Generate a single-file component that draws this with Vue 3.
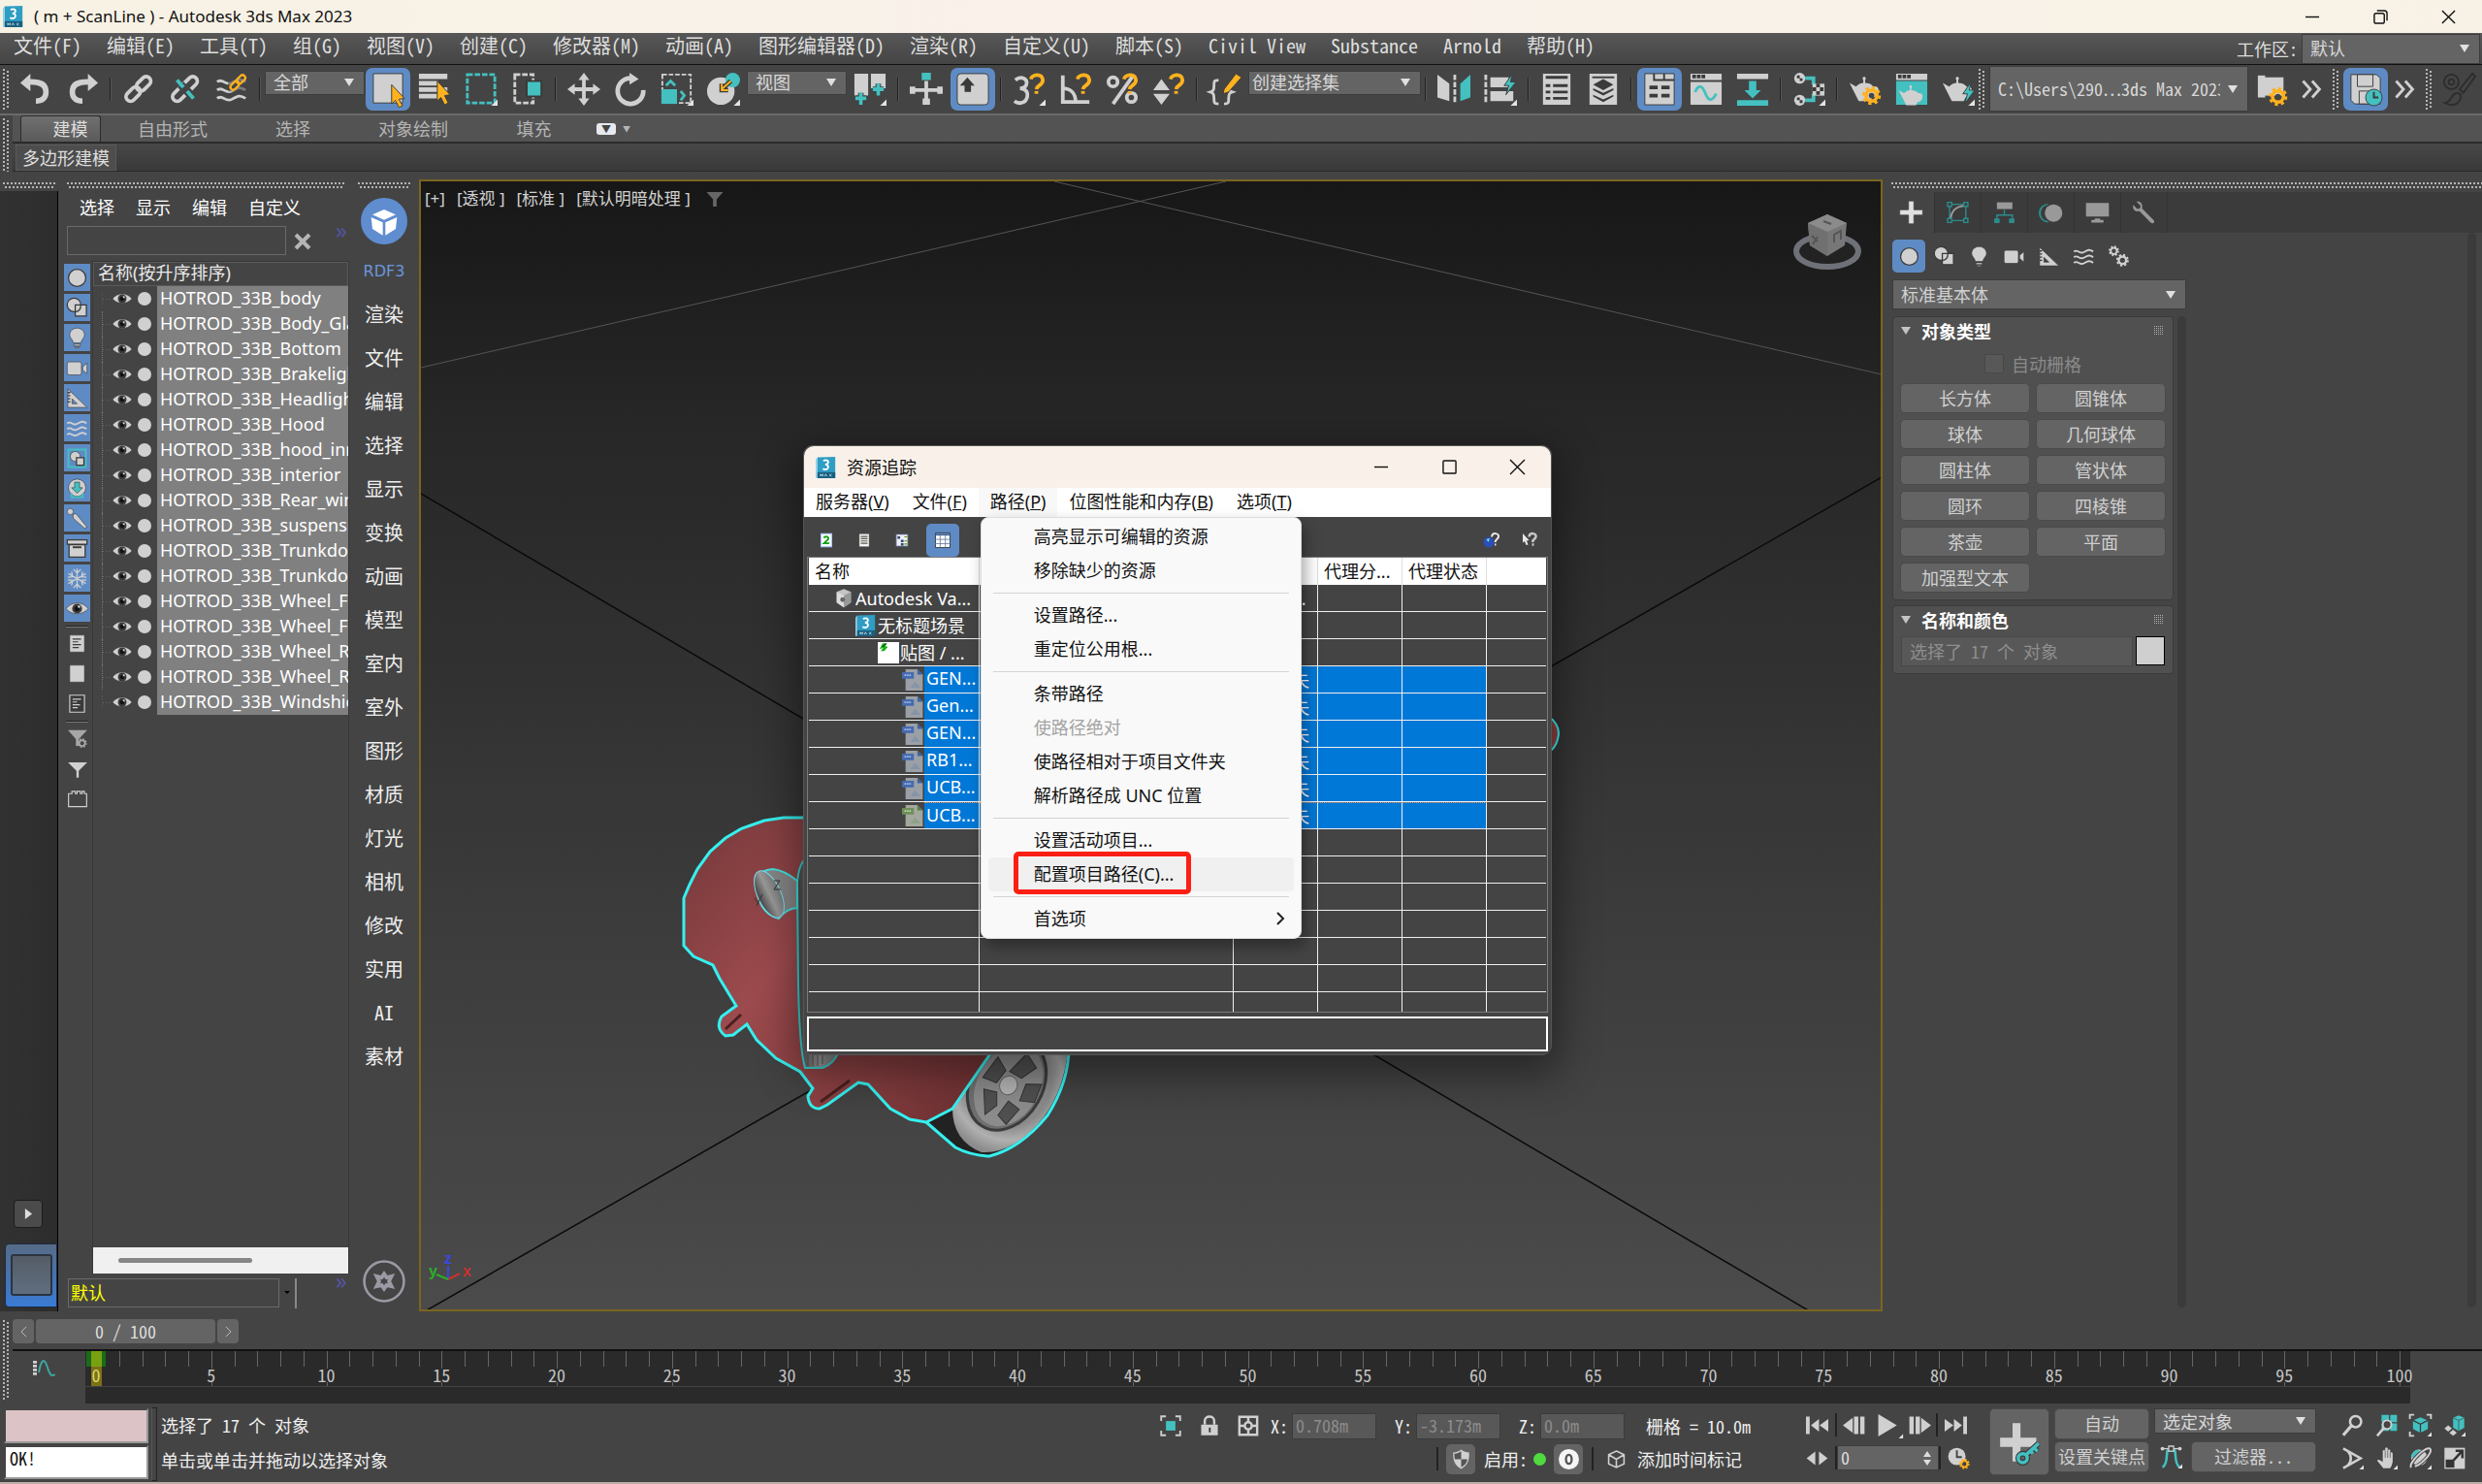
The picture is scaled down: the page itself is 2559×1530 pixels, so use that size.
<script setup>
import { ref } from 'vue'

const G = '#d0d0d0'
const T = '#44c0c0'
const O = '#ffb21e'
const D = '#3a3a3a'

const hook = `<path d="M20 7c1-5 12-7 13 1 0 6-6 5-7 10" fill="none" stroke="${O}" stroke-width="4"/><path d="M24 20h4v3h-4z" fill="${O}"/>`
const pot = `<path d="M1 11l7 4c3-3 6-4 8-4l0-3-1-2 2-2 2 2-1 2 0 3c3 0 7 1 9 4 5-1 7 3 5 8-2 3-4 4-6 4l-2 4H11L1 11z" fill="${G}"/>`
const gear = (x, y, r, c, hole) =>
  `<circle cx="${x}" cy="${y}" r="${r}" fill="none" stroke="${c}" stroke-width="${r / 1.6}"/><circle cx="${x}" cy="${y}" r="${r * 1.45}" fill="none" stroke="${c}" stroke-width="${r / 2}" stroke-dasharray="${(r * 0.57).toFixed(2)}"/><circle cx="${x}" cy="${y}" r="${r / 2}" fill="${hole}"/>`
const corner = '<path d="M36 29v7h-7z" fill="#e4e4e4"/>'
const chain = (c) =>
  `<g fill="none" stroke="${c}" stroke-width="4" transform="rotate(-45 18 18)"><rect x="17" y="12.500" width="18" height="10" rx="5"/><rect x="1" y="12.500" width="18" height="10" rx="5"/></g>`
const waves = (c) =>
  `<g fill="none" stroke="${c}" stroke-width="3"><path d="M2 10c6-5 9 5 16 1s9-5 15-1M2 19c6-5 9 5 16 1s9-5 15-1M2 28c6-5 9 5 16 1s9-5 15-1"/></g>`
const bolt = `<path d="M32 10l-9 13h5l-3 11 11-15h-6z" fill="${T}" stroke="${D}"/>`

const art = {
  undo: `<path d="M1 11L12 1v6c14 0 20 4 20 14 0 9-6 13-14 13v-6c5 0 8-2 8-7s-4-8-14-8v7z" fill="${G}"/>`,
  redo: `<path d="M35 11L24 1v6C10 7 4 11 4 21c0 9 6 13 14 13v-6c-5 0-8-2-8-7s4-8 14-8v7z" fill="${G}"/>`,
  link: chain(G),
  unlink: chain(G) + `<path d="M13 13l10 10" stroke="#444" stroke-width="9"/><path d="M9 8l7 8M20 20l7 8" stroke="${T}" stroke-width="4"/>`,
  bind: waves(G) + `<g transform="translate(14 0) scale(.6)"><path d="M0 0h36v34H0z" fill="#444" opacity=".6"/>${chain(O)}</g>`,
  pick: `<path d="M2 1h32v32H2z" fill="${G}" stroke="${D}"/><path d="M22 13l14 15-6 1 4 7-4 2-4-8-4 4z" fill="${O}" stroke="${D}"/>`,
  byname: `<path d="M1 1h31v6H1zM1 9h21v5H1zM1 16h31v5H1zM1 23h21v5H1z" fill="${G}"/><path d="M21 9l14 15-6 1 4 8-4 2-4-8-4 4z" fill="${O}" stroke="${D}"/>`,
  rect: `<path d="M3 2h30v31H3z" fill="none" stroke="${T}" stroke-width="3" stroke-dasharray="6 2"/>` + corner,
  crossing: `<path d="M4 2h20v31H4z" fill="none" stroke="${G}" stroke-width="3" stroke-dasharray="6 2"/><path d="M17 9h16v17H17z" fill="${T}" stroke="${D}" stroke-width="2"/>`,
  move: `<path d="M18 0l6 8h-4v8h8v-4l8 6-8 6v-4h-8v8h4l-6 8-6-8h4v-8H8v4l-8-6 8-6v4h8V8h-4z" fill="${G}"/>`,
  rotate: `<path d="M18 6a14 14 0 1 0 14 13" fill="none" stroke="${G}" stroke-width="5"/><path d="M17 0l10 7-10 6z" fill="${G}"/>`,
  scale: `<path d="M2 2h31v31H2z" fill="none" stroke="${G}" stroke-width="2" stroke-dasharray="5 2"/><path d="M1 18h17v16H1z" fill="${T}"/><path d="M6 14l5-5 5 5M22 20l4 5-4 5" fill="none" stroke="${T}" stroke-width="3"/>` + corner,
  place: `<circle cx="15" cy="20" r="15" fill="${G}"/><circle cx="28" cy="8" r="8" fill="${T}"/><path d="M26 9L16 18m0-6v7h7" fill="none" stroke="${D}" stroke-width="5"/><path d="M26 9L16 18m0-6v7h7" fill="none" stroke="${O}" stroke-width="2"/>` + corner,
  pivot: `<path d="M1 1h15v24H1zM19 1h16v16H19z" fill="${G}"/><path d="M8 22v13M2 28h12M27 12v13M21 18h12" stroke="${D}" stroke-width="6"/><path d="M8 22v13M2 28h12M27 12v13M21 18h12" stroke="${T}" stroke-width="4"/>` + corner,
  manip: `<path d="M18 9v26M1 19h34" stroke="${G}" stroke-width="4"/><path d="M14 28h8v7h-8zM0 15h6v8H0zM30 15h6v8h-6z" fill="${G}"/><path d="M13 0h10v8H13z" fill="${T}"/>`,
  keyb: `<rect x="1" y="1" width="34" height="34" rx="4" fill="${G}" stroke="${D}"/><path d="M12 5l8 9h-4v7h-7v-7H4z" fill="${D}"/>`,
  snap3: `<path d="M3 8c6-5 14-2 12 5-1 3-4 4-7 4 5 0 9 3 8 9-1 7-9 9-14 5" fill="none" stroke="${G}" stroke-width="4"/>` + hook + corner,
  angle: `<path d="M4 3v29h29M4 17c9 0 14 6 14 15" fill="none" stroke="${G}" stroke-width="4"/>` + hook,
  percent: `<circle cx="8" cy="10" r="5" fill="none" stroke="${G}" stroke-width="4"/><circle cx="28" cy="27" r="5" fill="none" stroke="${G}" stroke-width="4"/><path d="M30 3L8 34" stroke="${G}" stroke-width="4"/>` + hook,
  spin: `<path d="M1 19l9-12 9 12zM1 23h18l-9 12z" fill="${G}"/>` + hook,
  braces: `<path d="M11 8c-5 0-5 1-5 6s-1 6-4 7c3 1 4 2 4 7s0 6 5 6M17 34c5 0 5-1 5-6s1-6 4-7c-3-1-4-2-4-7" fill="none" stroke="${G}" stroke-width="3"/><path d="M17 18L30 1l6 4-14 16-6 2z" fill="${O}" stroke="${D}"/>`,
  mirror: `<path d="M0 2l13 10v19L0 27z" fill="${G}"/><path d="M36 2L25 12v19l11-4z" fill="${T}"/><path d="M19 2v32" stroke="${G}" stroke-width="3" stroke-dasharray="6 2"/>`,
  align: `<path d="M2 2v32" stroke="${G}" stroke-width="3" stroke-dasharray="6 2"/><path d="M7 5h20v11H7zM7 20h25v11H7z" fill="${G}"/><path d="M31 1l-9 13h5l-3 10 11-14h-6z" fill="${T}" stroke="${D}"/>` + corner,
  layers1: `<path d="M3 1h30v34H3z" fill="${G}"/><path d="M6 5h24M6 14h5M14 14h16M6 21h5M14 21h16M6 28h5M14 28h16" stroke="${D}" stroke-width="3"/>`,
  layers2: `<path d="M3 1h30v34H3z" fill="${G}"/><path d="M6 5h24" stroke="${D}" stroke-width="2"/><path d="M18 7l11 6-11 6-11-6zM7 17l11 5 11-5v2l-11 6-11-6zM7 24l11 5 11-5v2l-11 6-11-6z" fill="${D}"/>`,
  explorer: `<path d="M2 1h32v34H2z" fill="${G}" stroke="${D}"/><path d="M12 1v7h22M23 1v7" fill="none" stroke="${D}" stroke-width="2"/><path d="M7 16h9M20 16h9M7 25h9M20 25h9" stroke="${D}" stroke-width="4"/>`,
  curve: `<path d="M1 1h34v7H1zM1 10h34v25H1z" fill="${G}"/><path d="M3 2h4v4H3zM8 2h4v4H8zM13 2h4v4h-4z" fill="${D}"/><path d="M6 21c4-9 8-7 11 1s7 11 12 1" fill="none" stroke="${T}" stroke-width="3"/>`,
  download: `<path d="M1 1h34v6H1z" fill="${G}"/><path d="M1 30h34v6H1z" fill="${T}"/><path d="M14 9h8v10h5l-9 9-9-9h5z" fill="${T}"/>`,
  nodes: `<path d="M14 6h9v7M14 30h9v-7" fill="none" stroke="${T}" stroke-width="4"/><circle cx="8" cy="6" r="6" fill="${G}"/><circle cx="8" cy="30" r="6" fill="${G}"/><path d="M22 12h13v13H22z" fill="${G}"/><path d="M5 3h3v3H5zM8 6h3v3H8zM5 27h3v3H5zM8 30h3v3H8zM26 12h4v4h-4zM22 16h4v4h-4zM30 16h4v4h-4zM26 20h4v4h-4z" fill="${D}"/>` + corner,
  potgear: pot + gear(25, 25, 6, O, '#444'),
  potwin: `<path d="M1 1h34v7H1z" fill="${G}"/><path d="M3 2h4v4H3zM8 2h4v4H8zM13 2h4v4h-4z" fill="${D}"/><path d="M1 9h34v26H1z" fill="${T}"/><g transform="translate(3 10) scale(.82)">${pot}</g>`,
  potbolt: pot + bolt + corner,
  paper: `<path d="M2 3h8v24H2z" fill="${G}"/><path d="M9 5h21v20H9z" fill="${G}"/>` + gear(24, 26, 6, O, '#444'),
  more: `<path d="M10 9l8 9-8 9M20 9l8 9-8 9" fill="none" stroke="${G}" stroke-width="3"/>`,
  save: `<path d="M2 2h28l4 4v28H6l-4-4z" fill="${G}" stroke="${D}"/><path d="M9 2h17v13H9zM11 20h12v14H11z" fill="${G}" stroke="${D}"/><circle cx="27" cy="27" r="9" fill="${T}" stroke="${D}"/><path d="M27 21v6h5" fill="none" stroke="${D}" stroke-width="2"/>`,
  brush: `<g fill="none" stroke="#2d2d2d" stroke-width="2"><circle cx="10" cy="10" r="8"/><circle cx="10" cy="10" r="3"/><path d="M33 1L19 18l4 4L36 4zM17 22c-8 0-6 10-14 11 10 5 18 0 17-9z"/></g>`,
  sphere: `<circle cx="18" cy="18" r="14" fill="${G}" stroke="${D}" stroke-width="2"/>`,
  shapes: `<circle cx="13" cy="13" r="11" fill="${G}" stroke="${D}" stroke-width="2"/><path d="M15 13h18v18H15z" fill="${G}" stroke="${D}" stroke-width="2"/><path d="M15 24c6 0 9-4 9-11" fill="none" stroke="${D}" stroke-width="2"/>`,
  bulb: `<path d="M18 2c8 0 12 6 12 11s-5 7-6 13H12C11 20 6 18 6 13S10 2 18 2zM13 28h10v3H13zM15 32h6v2h-6z" fill="${G}" stroke="${D}"/>`,
  camera: `<rect x="2" y="8" width="23" height="21" rx="3" fill="${G}" stroke="${D}"/><path d="M27 16l7-6v17l-7-6z" fill="${G}" stroke="${D}"/>`,
  ruler: `<path d="M3 3v30h31zm7 16l8 8h-8z" fill="${G}" fill-rule="evenodd" stroke="${D}"/><path d="M3 9h4M3 14h4M3 19h4M3 24h4" stroke="${D}" stroke-width="2"/>`,
  waves: waves(G),
  gears: gear(10, 9, 5, G, '#444') + gear(24, 24, 6, G, '#444'),
  group: `<path d="M4 4h28v28H4z" fill="none" stroke="${T}" stroke-width="3"/><circle cx="15" cy="15" r="8" fill="${G}" stroke="${D}"/><path d="M17 17h12v12H17z" fill="${G}" stroke="${D}" stroke-width="2"/>`,
  xref: `<circle cx="18" cy="17" r="14" fill="${G}" stroke="${D}"/><path d="M14 8h8v9h5l-9 9-9-9h5z" fill="${T}" stroke="${D}"/><path d="M9 26v6h18v-6" fill="none" stroke="${T}" stroke-width="3"/>`,
  bone: `<circle cx="7" cy="7" r="5" fill="${G}" stroke="${D}"/><path d="M11 12l5-2 18 22-4 2L12 18z" fill="${G}" stroke="${D}"/>`,
  box: `<path d="M2 4h32v7H2zM5 12h26v20H5z" fill="${G}" stroke="${D}" stroke-width="2"/><path d="M11 16h14" stroke="${D}" stroke-width="3"/>`,
  snow: `<g stroke="${G}" stroke-width="2" fill="none"><path d="M18 2v32M4 10l28 16M32 10L4 26M12 3l6 6 6-6M12 33l6-6 6 6M3 16l8-1-2-8M33 16l-8-1 2-8M3 20l8 1-2 8M33 20l-8 1 2 8"/></g>`,
  eye: `<path d="M0 18c9-12 27-12 36 0-9 11-27 11-36 0z" fill="${G}" stroke="${D}"/><circle cx="18" cy="18" r="8" fill="${D}"/><circle cx="18" cy="18" r="4" fill="#111"/><circle cx="21" cy="15" r="2" fill="${G}"/>`,
  doc: `<path d="M5 3h26v30H5z" fill="${G}" stroke="${D}"/><path d="M10 10h15M10 15h10M10 20h15M10 25h11" stroke="${D}" stroke-width="2"/>`,
  blank: `<path d="M5 3h26v30H5z" fill="${G}" stroke="${D}"/>`,
  docdark: `<path d="M5 3h26v30H5z" fill="#3a3a3a" stroke="${G}" stroke-width="2"/><path d="M10 10h15M10 15h8M10 20h13M10 25h9" stroke="${G}" stroke-width="2"/>`,
  funnelgear: `<path d="M1 3h34L20 19v12h-5V19z" fill="#a6a6a6"/>` + gear(26, 26, 5, '#a6a6a6', '#444'),
  funnel: `<path d="M1 7h34L20 22v12h-4V22z" fill="${G}"/>`,
  brick: `<path d="M2 9h6V5h6v4h3V5h6v4h3V5h4v4h4v23H2z" fill="none" stroke="${G}" stroke-width="2"/>`,
  plus: `<path d="M14 1h8v13h13v8H22v13h-8V22H1v-8h13z" fill="#e0e0e0" stroke="${D}"/>`,
  modify: `<path d="M6 6h24v24H6z" fill="none" stroke="#2d8c8c" stroke-width="2"/><path d="M7 30C8 16 14 9 29 8" fill="none" stroke="#999" stroke-width="3"/><g fill="#3b3b3b" stroke="#2d8c8c" stroke-width="2"><path d="M3 3h6v6H3zM27 3h6v6h-6zM3 27h6v6H3zM27 27h6v6h-6z"/></g>`,
  hier: `<path d="M7 3h23v10H7z" fill="#999"/><path d="M18 14v7M7 29v-7h23v7" fill="none" stroke="#2d8c8c" stroke-width="2"/><path d="M3 27h8v7H3zM25 27h8v7h-8z" fill="#2d8c8c"/>`,
  motion: `<circle cx="22" cy="19" r="13" fill="#999"/><path d="M14 6a13 13 0 0 0 0 26M10 7a13 13 0 0 0 0 24" fill="none" stroke="#2d8c8c" stroke-width="2"/>`,
  display: `<path d="M1 4h34v20H1zM14 27h8v2h5v4H9v-4h5z" fill="#999"/>`,
  wrench: `<path d="M7 2l6 6-1 4-4 1-6-6c-2 8 5 11 9 9l17 17c4 3 7-1 4-4L15 12c2-7-3-11-8-10z" fill="#999"/>`,
  cubelogo: `<circle cx="18" cy="18" r="18" fill="#5f8dd0"/><path d="M18 9l9 4-9 4-9-4zM8 15l9 4v10l-8-5zM28 15l-9 4v10l8-5z" fill="#fff"/>`,
  cog: `<circle cx="18" cy="18" r="16" fill="none" stroke="#9a9aa4" stroke-width="2"/><path d="M18 12l2 3 4-1-2 4 2 4-4-1-2 3-2-3-4 1 2-4-2-4 4 1z" fill="none" stroke="#9a9aa4" stroke-width="3"/>`,
  track: `<path d="M0 6h6v4H0zM0 12h6v4H0zM0 18h6v4H0zM0 24h6v4H0z" fill="${G}"/><path d="M9 24C13 2 18 2 22 15s7 16 12 12" fill="none" stroke="#3aa7a2" stroke-width="3"/>`,
  lockbox: `<path d="M2 10V2h8M26 2h8v8M34 26v8h-8M10 34H2v-8" fill="none" stroke="${G}" stroke-width="3"/><path d="M10 10h16v16H10z" fill="${T}"/>`,
  lock: `<path d="M10 16v-6c0-10 16-10 16 0v6" fill="none" stroke="${G}" stroke-width="4"/><path d="M4 16h28v18H4z" fill="${G}"/><path d="M17 21h3v8h-3z" fill="#333"/>`,
  grid: `<path d="M3 3h30v30H3zM18 3v8M18 25v8M3 18h8M25 18h8" fill="none" stroke="${G}" stroke-width="4"/><circle cx="18" cy="18" r="6" fill="none" stroke="${G}" stroke-width="4"/>`,
  shield: `<path d="M18 1c5 4 9 5 14 5 1 14-3 23-14 29C7 29 3 20 4 6c5 0 9-1 14-5z" fill="${G}"/><path d="M18 4v14H7c-1-4-1-6-1-10 5 0 8-1 12-4zM18 18h11c-1 7-5 11-11 14z" fill="#555"/>`,
  zero: `<circle cx="18" cy="18" r="18" fill="#f4f4f4"/><ellipse cx="18" cy="18" rx="5" ry="8" fill="none" stroke="#555" stroke-width="4"/>`,
  cube: `<path d="M18 2l15 7v18l-15 7-15-7V9zM3 9l15 9 15-9M18 18v16" fill="none" stroke="${G}" stroke-width="3"/>`,
  first: `<path d="M0 4h6v28H0zM8 18L21 8v20zM22 18L36 8v20z" fill="${G}"/>`,
  last: `<path d="M30 4h6v28h-6zM28 18L15 8v20zM14 18L0 8v20z" fill="${G}"/>`,
  prev: `<path d="M0 18L16 6v24zM18 4h7v28h-7zM28 4h7v28h-7z" fill="${G}"/>`,
  next: `<path d="M36 18L20 6v24zM1 4h7v28H1zM11 4h7v28h-7z" fill="${G}"/>`,
  play: `<path d="M4 0l30 18L4 36z" fill="${G}"/><path d="M44 32v7h-7z" fill="#e4e4e4"/>`,
  keymode: `<path d="M15 7v22L1 18zM21 7v22l14-11z" fill="${G}"/>`,
  clock: `<circle cx="15" cy="15" r="14" fill="${G}"/><path d="M15 5v11h8" fill="none" stroke="#444" stroke-width="3"/>` + gear(27, 27, 5, O, '#444'),
  setkey: `<path d="M12 1h7v13h14v8H19v13h-7V22H1v-8h11z" fill="${G}"/><path d="M35 19L24 29M31 23l3 3M28 26l2 2" fill="none" stroke="${D}" stroke-width="5"/><circle cx="21" cy="32" r="4" fill="#646464" stroke="${D}" stroke-width="5"/><path d="M35 19L24 29M31 23l3 3M28 26l2 2" fill="none" stroke="${T}" stroke-width="3"/><circle cx="21" cy="32" r="4" fill="none" stroke="${T}" stroke-width="3"/>`,
  tangent: `<path d="M4 34c9-4 6-22 8-27h12c2 5-1 23 8 27" fill="none" stroke="${T}" stroke-width="4"/><path d="M2 4h32" stroke="${G}" stroke-width="2"/><circle cx="4" cy="4" r="3" fill="${G}"/><circle cx="32" cy="4" r="3" fill="${G}"/><path d="M14 0h8v8h-8z" fill="#444" stroke="${G}" stroke-width="2"/>` + corner,
  zoom: `<circle cx="23" cy="12" r="9" fill="none" stroke="${G}" stroke-width="4"/><path d="M16 19L3 34" stroke="${G}" stroke-width="5"/>`,
  zoomall: `<path d="M10 1h12v12H10zM24 1h11v12H24zM10 15h12v12H10zM24 15h11v12H24z" fill="${T}"/><circle cx="19" cy="17" r="7" fill="#444" stroke="${G}" stroke-width="3"/><path d="M14 22L3 35" stroke="${G}" stroke-width="4"/>`,
  zoomext: `<path d="M1 8V1h7M28 1h7v7M8 35H1v-7" fill="none" stroke="${G}" stroke-width="3"/><path d="M18 5l12 5v14l-12 6-12-6V10z" fill="${T}"/><path d="M6 10l12 6 12-6M18 16v14" fill="none" stroke="${D}" stroke-width="2"/>` + corner,
  zoomobj: `<path d="M16 6l9-4 9 4v16l-9 5-9-5z" fill="${T}"/><path d="M16 6l9 4 9-4M25 10v16" fill="none" stroke="${D}"/><path d="M8 18l6 5-6 5-6-5zM16 25l6 5-6 5-6-5z" fill="${G}"/>` + corner,
  fov: `<path d="M3 2l28 16L3 34M10 6c7 7 7 17 0 24" fill="none" stroke="${G}" stroke-width="4"/>` + corner,
  hand: `<path d="M12 20V6q2-3 4 0V2q2-3 4 0v3q3-3 4 0v4q3-2 4 1v14q-1 6-4 10H13L3 22q1-4 9 2z" fill="${G}"/><path d="M16 6v11M20 5v12M24 9v8" stroke="#444"/>` + corner,
  orbit: `<circle cx="16" cy="17" r="13" fill="${G}"/><path d="M16 4v13H3C4 9 8 5 16 4z" fill="${T}"/><path d="M3 33C-2 26 28-4 34 3c4 8-18 27-25 28" fill="none" stroke="#444" stroke-width="6"/><path d="M3 33C-2 26 28-4 34 3c4 8-18 27-25 28" fill="none" stroke="${G}" stroke-width="3"/>` + corner,
  maxview: `<path d="M2 1h33v34H2z" fill="${G}"/><path d="M4 20h14v13H4z" fill="#333"/><path d="M17 21L30 7M20 6h11v12" fill="none" stroke="#333" stroke-width="4"/>`,
  app: `<path d="M3 1l30-1v35H3z" fill="#2f9dc4"/><path d="M3 1L0 4v32l3-1z" fill="#8fd0e6"/><path d="M3 26h30v10H3z" fill="#175f80"/><path d="M13 7c4-3 9-1 8 3-1 2-3 3-5 3 3 0 6 2 5 5-1 4-6 4-9 2" fill="none" stroke="#fff" stroke-width="3"/><path d="M8 33v-4l2 3 2-3v4M15 33l2-4 2 4M23 29l4 4M27 29l-4 4" fill="none" stroke="#fff"/>`,
  vault: `<path d="M18 2l12 5v18l-12 8-12-8V7z" fill="#c4c4c4"/><path d="M18 13v20l12-8V7z" fill="#999"/><path d="M6 7v18l12 8V13z" fill="#dcdcdc"/><circle cx="16" cy="20" r="4" fill="#666"/>`,
  sheet: `<path d="M0 0h36v36H0z" fill="#fff"/><path d="M3 12L8 2h8l-4 4 5 2-6 7H5l4-5z" fill="#1db21d"/><path d="M8 8l6-5" stroke="#143c14" stroke-width="2"/>`,
  jpg: `<path d="M6 0h20l9 9v27H6z" fill="#9aa0a6"/><path d="M26 0l9 9h-9z" fill="#3f62a6"/><path d="M0 5h20v11H0z" fill="#456bb0"/><path d="M4 10h12" stroke="#9db4e0" stroke-width="3" stroke-dasharray="3 1"/><path d="M14 31l8-10 9 10z" fill="#8694a8"/>`,
  png: `<path d="M6 0h20l9 9v27H6z" fill="#a3a89e"/><path d="M26 0l9 9h-9z" fill="#5a7a48"/><path d="M0 5h20v11H0z" fill="#6e8f58"/><path d="M4 10h12" stroke="#b5cfa4" stroke-width="3" stroke-dasharray="3 1"/><path d="M14 31l8-10 9 10z" fill="#8fa08a"/>`,
  refresh: `<path d="M4 1h28v34H4z" fill="#fff" stroke="#a9c9ff" stroke-width="3"/><path d="M11 12c5-7 14-3 12 3L12 26h14" fill="none" stroke="#13a313" stroke-width="5"/>`,
  list: `<path d="M5 1h26v34H5z" fill="#f4f4ec" stroke="#555"/><path d="M9 8h18M9 14h18M9 20h18M9 26h18" stroke="#555" stroke-width="3"/>`,
  tree: `<path d="M2 2h32v32H2z" fill="#eef" stroke="#456" stroke-width="3"/><path d="M6 8h7v6H6zM15 17h7v6h-7zM15 26h7v6h-7z" fill="#346"/><path d="M24 9h8M24 20h8M24 28h8" stroke="#690" stroke-width="3"/>`,
  table: `<path d="M1 1h34v34H1z" fill="#fff" stroke="#234" stroke-width="2"/><path d="M1 5h34" stroke="#345a94" stroke-width="4"/><path d="M1 16h34M1 26h34M12 7v28M24 7v28" stroke="#6a7f9f" stroke-width="2"/>`,
  help: `<circle cx="12" cy="22" r="11" fill="#2a4fb8"/><path d="M7 16l7-2-3 8z" fill="#7fe0d0"/><path d="M18 11c1-10 16-8 14 0-1 5-6 4-7 11M24 27h3" fill="none" stroke="#e8e8e8" stroke-width="4"/>`,
  helpcur: `<path d="M4 4l13 14-5 1 3 8-4 1-3-8-4 3z" fill="#e8e8e8"/><path d="M17 11c1-10 16-8 14 0-1 5-6 4-7 11M23 27h4" fill="none" stroke="#c8c8c8" stroke-width="5"/>`,
}

const menus = ['文件(F)', '编辑(E)', '工具(T)', '组(G)', '视图(V)', '创建(C)', '修改器(M)', '动画(A)', '图形编辑器(D)', '渲染(R)', '自定义(U)', '脚本(S)', 'Civil View', 'Substance', 'Arnold', '帮助(H)']

const tools = [
  'undo', 'redo', '|', 'link', 'unlink', 'bind', '|',
  { label: '选择过滤器', value: '全部', cls: 'w103' },
  '*pick', 'byname', 'rect', 'crossing', '|', 'move', 'rotate', 'scale', 'place',
  { label: '参考坐标系', value: '视图', cls: 'w103' },
  'pivot', '|', 'manip', '*keyb', '|', 'snap3', 'angle', 'percent', 'spin', '|', 'braces',
  { label: '命名选择集', value: '创建选择集', cls: 'w178' },
  '|', 'mirror', 'align', '|', 'layers1', 'layers2', '|', '*explorer', 'curve', 'download', '|', 'nodes', '|',
  'potgear', 'potwin', 'potbolt',
]
const ribbon = ['自由形式', '选择', '对象绘制', '填充']
const filters = ['sphere', 'shapes', 'bulb', 'camera', 'ruler', 'waves', 'group', 'xref', 'bone', 'box', 'snow', 'eye']
const objects = ['body', 'Body_Glass', 'Bottom', 'Brakelights', 'Headlights', 'Hood', 'hood_inner', 'interior', 'Rear_window', 'suspension', 'Trunkdoor', 'Trunkdoor_in', 'Wheel_FL', 'Wheel_FR', 'Wheel_RL', 'Wheel_RR', 'Windshield'].map((n) => 'HOTROD_33B_' + n)
const plugin = ['渲染', '文件', '编辑', '选择', '显示', '变换', '动画', '模型', '室内', '室外', '图形', '材质', '灯光', '相机', '修改', '实用', 'AI', '素材']
const panelTabs = ['plus', 'modify', 'hier', 'motion', 'display', 'wrench']
const categories = ['sphere', 'shapes', 'bulb', 'camera', 'ruler', 'waves', 'gears']
const primitives = ['长方体', '圆锥体', '球体', '几何球体', '圆柱体', '管状体', '圆环', '四棱锥', '茶壶', '平面', '加强型文本']

const dialogMenus = [
  { t: '服务器', k: 'V' },
  { t: '文件', k: 'F' },
  { t: '路径', k: 'P', open: true },
  { t: '位图性能和内存', k: 'B' },
  { t: '选项', k: 'T' },
]
const pathMenu = ['高亮显示可编辑的资源', '移除缺少的资源', '-', '设置路径...', '重定位公用根...', '-', '条带路径', '使路径绝对', '使路径相对于项目文件夹', '解析路径成 UNC 位置', '-', '设置活动项目...', '配置项目路径(C)...', '-', '首选项']
const rows = [
  { name: 'Autodesk Va...', icon: 'vault', cls: 'd0', state: '已注销...' },
  { name: '无标题场景', icon: 'app', cls: 'd1' },
  { name: '贴图 / ...', icon: 'sheet', cls: 'd2' },
  ...['GEN...', 'Gen...', 'GEN...', 'RB1...', 'UCB...'].map((name) => ({ name, icon: 'jpg', cls: 'd3', sel: true, state: '文件丢失' })),
  { name: 'UCB...', icon: 'png', cls: 'd3', sel: true, focus: true, state: '文件丢失' },
  ...Array.from({ length: 6 }, () => ({})),
  { short: true },
]

const frames = Array.from({ length: 101 }, (_, i) => i)
const coords = [
  { axis: 'X', value: ref('0.708m') },
  { axis: 'Y', value: ref('-3.173m') },
  { axis: 'Z', value: ref('0.0m') },
]
</script>

<template>
  <div class="app">
    <header class="title">
      <svg class="i24" viewBox="0 0 36 36" v-html="art.app"></svg>
      <span class="title-text">( m + ScanLine ) - Autodesk 3ds Max 2023</span>
      <button class="win" aria-label="最小化"><svg viewBox="0 0 16 16"><path d="M0 8h15" /></svg></button>
      <button class="win" aria-label="还原"><svg viewBox="0 0 16 16"><rect x="1" y="4" width="11" height="11" rx="2" /><path d="M4 1h8q3 0 3 3v8" /></svg></button>
      <button class="win" aria-label="关闭"><svg viewBox="0 0 16 16"><path d="M1 1l14 14M15 1L1 15" /></svg></button>
    </header>

    <nav class="menubar">
      <button v-for="m in menus" :key="m">{{ m }}</button>
      <label class="workspace">工作区:
        <span class="combo workspace-combo"><select><option>默认</option></select><i></i></span>
      </label>
    </nav>

    <div class="toolbar">
      <span class="grip-v"></span>
      <div class="tools">
        <template v-for="(t, n) in tools" :key="n">
          <span v-if="t === '|'" class="sep"></span>
          <span v-else-if="t.label" class="combo top" :class="t.cls"><select :aria-label="t.label"><option>{{ t.value }}</option></select><i></i></span>
          <button v-else class="tool" :class="{ on: t[0] === '*' }" :aria-label="t">
            <svg viewBox="0 0 36 36" v-html="art[t.replace('*', '')]"></svg>
          </button>
        </template>
      </div>
      <span class="grip-v"></span>
      <span class="combo path-combo"><select aria-label="项目文件夹"><option>C:\Users\290…3ds Max 2023</option></select><i></i></span>
      <button class="tool" aria-label="项目设置"><svg viewBox="0 0 36 36" v-html="art.paper"></svg></button>
      <button class="tool small" aria-label="更多"><svg viewBox="0 0 36 36" v-html="art.more"></svg></button>
      <span class="grip-v"></span>
      <button class="tool on" aria-label="自动保存"><svg viewBox="0 0 36 36" v-html="art.save"></svg></button>
      <button class="tool small" aria-label="更多"><svg viewBox="0 0 36 36" v-html="art.more"></svg></button>
      <span class="grip-v"></span>
      <button class="tool" aria-label="画笔"><svg viewBox="0 0 36 36" v-html="art.brush"></svg></button>
    </div>

    <div class="ribbon">
      <span class="grip-v"></span>
      <div class="ribbon-body">
        <div class="ribbon-tabs">
          <button class="rtab active">建模</button>
          <button v-for="(r, n) in ribbon" :key="r" class="rtab" :class="'r' + n">{{ r }}</button>
          <button class="rmini" aria-label="最小化功能区"><span>▼</span><small>▼</small></button>
        </div>
        <div class="ribbon-panel"><button>多边形建模</button></div>
      </div>
    </div>

    <main class="work">
      <aside class="strip">
        <span class="grip-h"></span>
        <div class="strip-body">
          <button class="strip-play" aria-label="展开"><svg viewBox="0 0 10 14"><path d="M1 1l8 6-8 6z" fill="#ddd" /></svg></button>
          <button class="strip-view" aria-label="视口布局"><span></span></button>
        </div>
      </aside>

      <aside class="explorer">
        <span class="grip-h"></span>
        <div class="ex-menu"><button>选择</button><button>显示</button><button>编辑</button><button>自定义</button></div>
        <div class="ex-search">
          <input type="text" aria-label="查找" />
          <button aria-label="清除"><svg viewBox="0 0 18 18"><path d="M2 2l14 14M16 2L2 16" stroke="#b5b5b5" stroke-width="4" /></svg></button>
          <span class="chev">»</span>
        </div>
        <div class="ex-body">
          <div class="ex-icons">
            <button v-for="f in filters" :key="f" class="fi" :aria-label="f"><svg viewBox="0 0 36 36" v-html="art[f]"></svg></button>
            <hr />
            <button v-for="f in ['doc', 'blank', 'docdark']" :key="f" class="fi plain" :aria-label="f"><svg viewBox="0 0 36 36" v-html="art[f]"></svg></button>
            <hr />
            <button v-for="f in ['funnelgear', 'funnel', 'brick']" :key="f" class="fi plain wide" :aria-label="f"><svg viewBox="0 0 36 36" v-html="art[f]"></svg></button>
          </div>
          <div class="ex-tree">
            <div class="ex-head">名称(按升序排序)</div>
            <ul>
              <li v-for="o in objects" :key="o">
                <svg class="ex-eye" viewBox="0 0 36 36" v-html="art.eye"></svg>
                <span class="ex-dot"></span>
                <span class="ex-name">{{ o }}</span>
              </li>
            </ul>
            <div class="ex-scroll"><span></span></div>
          </div>
        </div>
        <div class="ex-foot">
          <input type="text" aria-label="层" value="默认" />
          <span class="caret"></span>
          <span class="chev">»</span>
        </div>
      </aside>

      <aside class="plugin">
        <span class="grip-h"></span>
        <svg class="logo" viewBox="0 0 36 36" v-html="art.cubelogo"></svg>
        <span class="brand">RDF3</span>
        <button v-for="p in plugin" :key="p">{{ p }}</button>
        <svg class="cog" viewBox="0 0 36 36" v-html="art.cog"></svg>
      </aside>

      <section class="viewport">
        <svg class="scene" viewBox="434 187 1505 1163" preserveAspectRatio="none">
          <defs>
            <linearGradient id="red" x1="705" y1="900" x2="1000" y2="1150" gradientUnits="userSpaceOnUse">
              <stop offset="0" stop-color="#7d3c3e" /><stop offset=".35" stop-color="#9c4a4d" /><stop offset=".7" stop-color="#883f41" /><stop offset="1" stop-color="#6d3032" />
            </linearGradient>
            <linearGradient id="steel"><stop offset="0" stop-color="#444" /><stop offset=".5" stop-color="#999" /><stop offset="1" stop-color="#777" /></linearGradient>
            <radialGradient id="tyre" gradientUnits="userSpaceOnUse" cx="1040" cy="1118" r="72"><stop offset="0" stop-color="#888" /><stop offset=".6" stop-color="#8a8a8a" /><stop offset=".8" stop-color="#b0b0b0" /><stop offset="1" stop-color="#8c8c8c" /></radialGradient>
          </defs>
          <g fill="none" stroke="#555"><path d="M434 379L1264 187M1087 187L1940 386" /></g>
          <g fill="none" stroke="#0a0a0a" stroke-width="1.500"><path d="M434 509L1866 1352M438 1352L1940 492" /></g>
          <path d="M955 1157L985 1183Q1000 1191 1020 1192Q1052 1184 1080 1150Q1102 1115 1102 1080L1030 1060L975 1130z" fill="#222" stroke="#35f0f0" stroke-width="3" />
          <path d="M982 1143L1015 1085H1101Q1096 1125 1076 1152Q1045 1190 1012 1188Q982 1176 982 1143z" fill="url(#tyre)" />
          <g transform="rotate(30 1038 1118)">
            <ellipse cx="1038" cy="1118" rx="37" ry="50" fill="#6f6f6f" stroke="#3c3c3c" stroke-width="3" />
            <ellipse cx="1040" cy="1118" rx="32" ry="45" fill="#8c8c8c" />
            <path d="M1040 1080l16 8-8 17h-14zM1016 1098l14 8-2 16-15 2zM1020 1134l13-4 7 12-6 14zM1048 1132l14 2-4 20-12-4zM1055 1108l14-8 3 20-14 6z" fill="#505050" stroke="#333" />
            <ellipse cx="1040" cy="1118" rx="9" ry="10" fill="#b4b4b4" stroke="#666" />
          </g>
          <path d="M840 843L808 843L788 846L765 854L748 864L732 878L719 896L711 912L705 926V975L715 986L735 995L742 1009L759 1037L744 1048Q737 1060 748 1068L756 1067L770 1056L780 1072L800 1091L825 1105L838 1122L833 1130Q834 1143 845 1143L853 1139L885 1116L895 1118L918 1143L938 1154L955 1157L982 1143L1020 1088V843z" fill="url(#red)" stroke="#35f0f0" stroke-width="3" />
          <path d="M748 1061l16-15M846 1136l30-22" stroke="#4a2020" stroke-width="3" />
          <path d="M832 885Q824 888 822 910L823 1010Q824 1080 830 1101L848 1101Q862 1096 866 1080V885z" fill="url(#steel)" stroke="#35d0d0" stroke-width="2" />
          <path d="M833 1085v14M838 1085v14M843 1085v14M848 1085v12" stroke="#555" />
          <path d="M779 905Q784 897 797 896Q808 897 822 908V936Q810 937 803 947Q780 942 779 905z" fill="#858585" stroke="#40e0e0" stroke-width="2" />
          <ellipse cx="793" cy="922" rx="12" ry="26" transform="rotate(-25 793 922)" fill="url(#steel)" stroke="#7de" />
          <path d="M798 908h6l-6 9h7M778 926l4 6m4-10l-6 12" fill="none" stroke="#333" />
          <path d="M1596 738Q1607 746 1607 756Q1606 770 1596 776z" fill="#8c4040" stroke="#35f0f0" stroke-width="2" />
          <g fill="none" stroke-width="2"><path d="M462 1319V1305" stroke="#3a48e0" /><path d="M462 1319l12-6" stroke="#c83232" /><path d="M462 1319l-12-5" stroke="#28b028" /></g>
          <ellipse cx="1884" cy="259" rx="32" ry="16" fill="#222" stroke="#6e7278" stroke-width="6" />
          <path d="M1884 221l20 9-2 23-18 11-18-11-2-23z" fill="#777" /><path d="M1864 230l20 9 20-9-20-9z" fill="#8b8b8b" /><path d="M1884 239v25l-18-11-2-23z" fill="#707070" />
          <path d="M1868 243l6 6m0-5l-5 8M1891 250v-8l7-4v9M1880 228l8 3" fill="none" stroke="#555" stroke-width="2" />
        </svg>
        <span class="axis z">z</span><span class="axis x">x</span><span class="axis y">y</span>
        <div class="vp-labels"><span>[+]</span><span>[透视 ]</span><span>[标准 ]</span><span>[默认明暗处理 ]</span>
          <svg viewBox="0 0 18 18"><path d="M0 1h18l-7 8v8H7V9z" fill="#666" /></svg></div>

        <section class="dialog">
          <header>
            <svg class="i24" viewBox="0 0 36 36" v-html="art.app"></svg>
            <span class="title-text">资源追踪</span>
            <button class="win" aria-label="最小化"><svg viewBox="0 0 16 16"><path d="M0 8h15" /></svg></button>
            <button class="win" aria-label="最大化"><svg viewBox="0 0 16 16"><rect x="1" y="1" width="14" height="14" rx="1" /></svg></button>
            <button class="win" aria-label="关闭"><svg viewBox="0 0 16 16"><path d="M0 0l16 16M16 0L0 16" /></svg></button>
          </header>
          <div class="dmenu">
            <div v-for="m in dialogMenus" :key="m.k" class="dm" :class="{ open: m.open }">
              <button>{{ m.t }}(<u>{{ m.k }}</u>)</button>
              <div v-if="m.open" class="drop">
                <template v-for="(p, n) in pathMenu" :key="n">
                  <hr v-if="p === '-'" />
                  <button v-else :class="{ hover: p[0] === '配' }" :disabled="p === '使路径绝对'">{{ p }}<svg v-if="p === '首选项'" viewBox="0 0 8 14"><path d="M1 1l6 6-6 6" fill="none" stroke="#222" stroke-width="2" /></svg></button>
                </template>
                <span class="mark"></span>
              </div>
            </div>
          </div>
          <div class="dtools">
            <button v-for="b in ['refresh', 'list', 'tree']" :key="b" :aria-label="b"><svg viewBox="0 0 36 36" v-html="art[b]"></svg></button>
            <button class="on" aria-label="表格视图"><svg viewBox="0 0 36 36" v-html="art.table"></svg></button>
            <span class="grow"></span>
            <button class="big" aria-label="帮助"><svg viewBox="0 0 36 36" v-html="art.help"></svg></button>
            <button class="big" aria-label="这是什么"><svg viewBox="0 0 36 36" v-html="art.helpcur"></svg></button>
          </div>
          <div class="dgrid">
            <table>
              <colgroup><col class="c1" /><col /><col class="c3" /><col class="c4" /><col class="c4" /><col class="c6" /></colgroup>
              <thead><tr><th>名称</th><th>完整路径</th><th>状态</th><th>代理分...</th><th>代理状态</th><th></th></tr></thead>
              <tbody>
                <tr v-for="(r, n) in rows" :key="n" :class="{ sel: r.sel, focus: r.focus, short: r.short }">
                  <td class="name"><div v-if="r.name" :class="r.cls"><svg viewBox="0 0 36 36" v-html="art[r.icon]"></svg><span>{{ r.name }}</span></div></td>
                  <td></td><td>{{ r.state }}</td><td></td><td></td><td></td>
                </tr>
              </tbody>
            </table>
          </div>
          <input class="dinput" type="text" aria-label="状态" />
        </section>
      </section>

      <aside class="panel">
        <span class="grip-h"></span>
        <div class="ptabs"><button v-for="(t, n) in panelTabs" :key="t" :class="{ active: n === 0 }" :aria-label="t"><svg viewBox="0 0 36 36" v-html="art[t]"></svg></button></div>
        <div class="pcols">
          <div class="pmain">
            <div class="pcats"><button v-for="(c, n) in categories" :key="c" :class="{ on: n === 0 }" :aria-label="c"><svg viewBox="0 0 36 36" v-html="art[c]"></svg></button></div>
            <span class="combo pcombo"><select aria-label="类别"><option>标准基本体</option></select><i></i></span>
            <div class="prow">
              <div class="rolls">
                <section class="roll">
                  <h3><i></i>对象类型<em></em></h3>
                  <label class="auto"><input type="checkbox" disabled />自动栅格</label>
                  <div class="prims"><button v-for="p in primitives" :key="p">{{ p }}</button></div>
                </section>
                <section class="roll">
                  <h3><i></i>名称和颜色<em></em></h3>
                  <div class="namecol"><input type="text" aria-label="名称" value="选择了 17 个 对象" /><button aria-label="颜色"></button></div>
                </section>
              </div>
              <span class="bar"></span>
            </div>
          </div>
          <span class="bar far"></span>
        </div>
      </aside>
    </main>

    <section class="timeline">
      <span class="grip-v"></span>
      <div class="tl">
        <div class="slider">
          <button aria-label="上一帧"><svg viewBox="0 0 8 14"><path d="M7 1L1 7l6 6" /></svg></button>
          <button class="thumb">0 / 100</button>
          <button aria-label="下一帧"><svg viewBox="0 0 8 14"><path d="M1 1l6 6-6 6" /></svg></button>
        </div>
        <div class="track">
          <svg class="tcurve" viewBox="0 0 36 36" v-html="art.track"></svg>
          <div class="ruler">
            <div class="ticks">
              <span v-for="f in frames" :key="f" :class="{ major: f % 5 === 0, now: f === 0 }"><b v-if="f % 5 === 0">{{ f }}</b></span>
            </div>
          </div>
        </div>
      </div>
    </section>

    <footer class="status">
      <div class="listener"><input aria-label="宏录制器" class="pink" type="text" /><input aria-label="侦听器" type="text" value="OK!" /></div>
      <span class="bevel"></span>
      <div class="prompt"><p>选择了 17 个 对象</p><p>单击或单击并拖动以选择对象</p></div>
      <div class="mid">
        <div class="line">
          <button v-for="b in ['lockbox', 'lock', 'grid']" :key="b" class="slot40" :aria-label="b"><svg viewBox="0 0 36 36" v-html="art[b]"></svg></button>
          <label v-for="c in coords" :key="c.axis" class="coord"><span>{{ c.axis }}:</span><input v-model="c.value.value" type="text" /></label>
          <span class="gridtext">栅格 = 10.0m</span>
        </div>
        <div class="line second">
          <span class="vline"></span>
          <button class="sq" aria-label="安全"><svg viewBox="0 0 36 36" v-html="art.shield"></svg></button>
          <span>启用:</span><span class="dot"></span>
          <button class="sq" aria-label="零"><svg viewBox="0 0 36 36" v-html="art.zero"></svg></button>
          <span class="vline"></span>
          <svg class="i24" viewBox="0 0 36 36" v-html="art.cube"></svg>
          <button class="tagtext">添加时间标记</button>
        </div>
      </div>
      <div class="transport">
        <div class="line">
          <template v-for="(b, n) in ['first', '|', 'prev', 'play', 'next', '|', 'last']" :key="n">
            <span v-if="b === '|'" class="vline"></span>
            <button v-else class="slot34" :class="b" :aria-label="b"><svg viewBox="0 0 36 36" v-html="art[b]"></svg></button>
          </template>
        </div>
        <div class="line">
          <button class="slot34 first" aria-label="关键点模式"><svg viewBox="0 0 36 36" v-html="art.keymode"></svg></button>
          <span class="vline"></span>
          <span class="frame"><input type="text" aria-label="当前帧" value="0" /><span><i class="up"></i><i class="down"></i></span></span>
          <span class="vline"></span>
          <button class="slot34 last" aria-label="时间配置"><svg viewBox="0 0 36 36" v-html="art.clock"></svg></button>
        </div>
      </div>
      <button class="gbtn bigkey" aria-label="设置关键点"><svg viewBox="0 0 36 36" v-html="art.setkey"></svg></button>
      <div class="keys"><button class="gbtn">自动</button><button class="gbtn">设置关键点</button></div>
      <div class="keys2">
        <span class="combo"><select aria-label="选定"><option>选定对象</option></select><i></i></span>
        <div><button class="slot34" aria-label="切线"><svg viewBox="0 0 36 36" v-html="art.tangent"></svg></button><button class="gbtn filter">过滤器...</button></div>
      </div>
      <div class="nav"><button v-for="b in ['zoom', 'zoomall', 'zoomext', 'zoomobj', 'fov', 'hand', 'orbit', 'maxview']" :key="b" :aria-label="b"><svg viewBox="0 0 36 36" v-html="art[b]"></svg></button></div>
    </footer>
  </div>
</template>

<style>
body { background: #444; }
</style>

<style scoped>
.app {
  --ui: "Noto Sans", "Noto Sans CJK SC", sans-serif;
  --mono: "Noto Sans Mono CJK SC", "Noto Sans CJK SC", monospace;
  display: flex; flex-direction: column; min-height: 100vh; overflow: hidden;
  background: #444; color: #dedede; font: 300 18px/24px var(--mono);
  border-bottom: 2px solid #c0aea6; box-sizing: border-box; position: relative;
}
.app *, .app *::before { box-sizing: border-box; }
button, input, select { font: inherit; color: inherit; background: none; border: 0; padding: 0; margin: 0; outline: 0; border-radius: 0; white-space: nowrap; }
ul { list-style: none; margin: 0; padding: 0; }
p, h3 { margin: 0; }
svg { display: block; flex: none; overflow: visible; }
.grow { flex: 1; }
.i24 { width: 22px; height: 24px; }

.grip-h { display: block; height: 6px; flex: none;
  background: repeating-linear-gradient(90deg, #b5b5b5 0 2px, transparent 2px 4px) 0 0 / 100% 2px no-repeat, repeating-linear-gradient(90deg, transparent 0 2px, #b5b5b5 2px 4px) 0 100% / 100% 2px no-repeat; }
.grip-v { display: block; width: 6px; flex: none; align-self: stretch;
  background: repeating-linear-gradient(#b5b5b5 0 2px, transparent 2px 4px) 0 0 / 2px 100% no-repeat, repeating-linear-gradient(transparent 0 2px, #b5b5b5 2px 4px) 100% 0 / 2px 100% no-repeat; }

.title { display: flex; align-items: center; height: 34px; flex: none; background: linear-gradient(90deg, #f7f2e4, #f9f1ea 45%, #f8f2e6); color: #111; font: 400 17px/24px var(--ui); padding: 0 0 0 3px; }
.title .title-text { padding-left: 10px; flex: 1; }
.win { width: 70px; height: 100%; display: flex; align-items: center; justify-content: center; }
.win svg { width: 15px; height: 15px; fill: none; stroke: #111; stroke-width: 1.5; }

.menubar { display: flex; height: 33px; flex: none; font-size: 20px; background: linear-gradient(#575757, #454545); border-bottom: 1px solid #111; padding-left: 1px; }
.menubar button { padding: 0 13px; height: 26px; }
.workspace { margin-left: auto; display: flex; align-items: center; font-size: 18px; gap: 4px; padding-right: 2px; }
.combo { display: block; position: relative; background: #646464; border: 1px solid #3c3c3c; height: 26px; }
.combo select { appearance: none; width: 100%; height: 100%; padding: 0 28px 2px 8px; text-overflow: clip; display: block; color: #d8d8d8; cursor: default; }
.combo i { position: absolute; right: 10px; top: 50%; margin-top: -4px; border: 5px solid transparent; border-top: 8px solid #e0e0e0; border-bottom: 0; }
.workspace-combo { width: 184px; height: 31px; }

.toolbar { display: flex; align-items: center; height: 52px; flex: none; padding: 2px 0 3px 3px; border-bottom: 2px solid #6a6a6a; }
.toolbar > .grip-v { margin-right: 4px; height: 42px; align-self: center; }
.tools { display: flex; align-items: center; flex: 1; min-width: 0; }
.tool { width: 48px; height: 44px; display: flex; align-items: center; justify-content: center; flex: none; }
.tool svg { width: 34px; height: 34px; }
.tool.small { width: 30px; margin-right: 8px; }
.tool.on { width: 46px; margin: 0 1px; background: #5f8bc4; border-radius: 7px; }
.sep { width: 2px; height: 24px; margin: 0 4px; background: #222; border-right: 1px solid #555; flex: none; }
.combo.top { height: 25px; align-self: flex-start; margin-top: 3px; flex: none; }
.combo.top select { line-height: 20px; }
.w103 { width: 103px; }
.w178 { width: 178px; }
.w178 select { padding-left: 3px; }
.path-combo { width: 267px; height: 47px; margin: 0 1px; flex: none; }

.ribbon { display: flex; height: 58px; flex: none; padding-left: 3px; }
.ribbon > .grip-v { margin: 3px 4px 0 0; }
.ribbon-body { flex: 1; }
.ribbon-tabs { display: flex; align-items: flex-end; height: 29px; background: #535353; border-bottom: 2px solid #2b2b2b; font: 400 18px/26px var(--ui); color: #b4b4b4; padding-left: 8px; }
.rtab { width: 130px; height: 27px; text-align: center; }
.rtab.active { width: 83px; border: 1px solid #2b2b2b; border-bottom: 0; border-radius: 3px 3px 0 0; background: linear-gradient(#707070, #5a5a5a); padding-left: 20px; color: #ddd; }
.r0 { width: 148px; } .r1 { width: 100px; } .r2 { width: 148px; } .r3 { width: 101px; }
.rmini { display: flex; align-items: center; height: 27px; gap: 7px; margin-left: 14px; }
.rmini span { width: 20px; height: 12px; border-radius: 3px; background: #e6e9ee; color: #444; font-size: 10px; line-height: 12px; }
.rmini small { font-size: 8px; }
.ribbon-panel { height: 29px; background: linear-gradient(#484848, #393939); border-bottom: 1px solid #2b2b2b; padding: 1px 3px; font: 400 18px/26px var(--ui); }
.ribbon-panel button { width: 104px; height: 27px; background: #4d4d4d; border: 1px solid #5a5a5a; }

.work { flex: 1; display: flex; align-items: stretch; min-height: 0; }
.strip { width: 60px; display: flex; flex-direction: column; padding-top: 11px; }
.strip .grip-h { margin: 0 3px; }
.strip-body { margin-top: 3px; flex: 1; background: linear-gradient(90deg, #323232, #2c2c2c); border-right: 1px solid #000; display: flex; flex-direction: column; justify-content: flex-end; }
.strip-play { width: 30px; height: 29px; margin: 0 0 16px 14px; border: 1px solid #1c1c1c; border-radius: 4px; background: #4b4b4b; display: flex; align-items: center; justify-content: center; }
.strip-play svg { width: 9px; height: 13px; }
.strip-view { height: 66px; margin: 0 0 4px 5px; padding: 10px 4px 11px 5px; border: 1px solid #1b2b44; border-radius: 4px 0 0 4px; background: linear-gradient(#566b86, #3a7bd5); }
.strip-view span { display: block; height: 100%; border: 2px solid #2b3440; border-radius: 3px; background: linear-gradient(#555c66, #5f6e80); }

.explorer { width: 302px; padding: 11px 2px 0 9px; display: flex; flex-direction: column; }
.explorer .grip-h { margin-right: 5px; }
.ex-menu { display: flex; gap: 22px; padding: 8px 0 0 13px; font: 400 18px/24px var(--ui); color: #fff; }
.ex-search { display: flex; align-items: flex-start; margin-top: 7px; height: 36px; }
.ex-search input { width: 226px; height: 30px; border: 1px solid #696969; }
.ex-search button { margin: 7px 0 0 8px; width: 18px; height: 18px; }
.ex-search .chev { margin-top: -8px; }
.chev { color: #53549c; font: 400 24px/24px var(--ui); margin-left: auto; margin-right: 2px; }
.ex-body { flex: 1; display: flex; min-height: 0; margin-left: -3px; }
.ex-icons { width: 27px; padding-top: 3px; display: flex; flex-direction: column; align-items: center; flex: none; }
.fi { width: 27px; height: 28px; margin-bottom: 3px; background: #5f8bc4; display: flex; align-items: center; justify-content: center; flex: none; }
.fi svg { width: 23px; height: 23px; }
.fi.plain { background: none; }
.fi.plain svg { width: 21px; height: 21px; }
.fi.wide svg { width: 24px; height: 21px; }
.ex-icons hr { width: 23px; height: 2px; border: 0; background: #777; border-top: 1px solid #222; margin: 1px 0 2px; flex: none; }
.ex-tree { flex: 1; min-width: 0; margin-left: 2px; border: 1px solid #383838; border-bottom: 0; display: flex; flex-direction: column; }
.ex-head { height: 25px; border: 1px solid #5a5a5a; padding-left: 4px; font: 400 18px/20px var(--ui); color: #e8e8e8; }
.ex-tree ul { flex: 1; overflow: hidden; }
.ex-tree li { height: 26px; display: flex; align-items: center; position: relative; }
.ex-tree li::before { content: ""; width: 8px; height: 100%; margin-left: 9px; border-left: 1px dotted #777; background: linear-gradient(90deg, #666 50%, transparent 50%) 0 50% / 3px 1px repeat-x; }
.ex-tree li:first-child::before, .ex-tree li:last-child::before { height: 14px; border-left-color: #555; }
.ex-eye { width: 20px; height: 20px; margin-left: 3px; }
.ex-dot { width: 14px; height: 14px; border-radius: 7px; background: #d0d0d0; margin: 0 6px; flex: none; }
.ex-name { flex: 1; height: 26px; overflow: hidden; background: #808080; color: #fff; font: 400 18px/25px var(--ui); padding-left: 3px; white-space: nowrap; }
.ex-scroll { height: 27px; background: #f0f0f0; padding: 11px 0 0 26px; flex: none; }
.ex-scroll span { display: block; width: 138px; height: 5px; border-radius: 3px; background: #868686; }
.ex-foot { display: flex; align-items: flex-start; padding: 5px 0 3px 1px; height: 39px; flex: none; }
.ex-foot input { width: 218px; height: 30px; border: 1px solid #696969; color: #ff0; padding: 0 0 3px 2px; font-family: var(--ui); font-weight: 400; }
.caret { width: 18px; height: 31px; border-right: 2px solid #888; position: relative; }
.caret::before { content: ""; position: absolute; left: 5px; top: 13px; border: 3px solid transparent; border-top-color: #000; border-bottom: 0; }
.ex-foot .chev { margin-top: -10px; }

.plugin { width: 70px; padding: 11px 2px 0 0; display: flex; flex-direction: column; align-items: center; font-size: 20px; color: #eee; }
.plugin .grip-h { width: 54px; }
.logo { width: 48px; height: 48px; margin-top: 10px; }
.brand { font: 400 16px/24px "DejaVu Sans", sans-serif; color: #6b97db; margin: 16px 0 9px; }
.plugin button { height: 45px; line-height: 45px; }
.cog { width: 46px; height: 46px; margin-top: auto; margin-bottom: 8px; }

.viewport { flex: 1; margin-top: 8px; border: 2px solid #7a6520; position: relative; overflow: hidden; background: linear-gradient(#171717, #262626 20%, #3a3a3a 62%, #4b4b4b); min-height: 1000px; }
.scene { position: absolute; inset: 0; width: 100%; height: 100%; }
.axis { position: absolute; font: 700 16px/16px "Liberation Sans", sans-serif; }
.axis.z { left: 24px; bottom: 44px; color: #3a48e0; } .axis.x { left: 43px; bottom: 31px; color: #c83232; } .axis.y { left: 8px; bottom: 31px; color: #28b028; }
.vp-labels { position: relative; display: flex; align-items: center; gap: 12px; padding: 6px 0 0 4px; font: 400 17px/24px var(--ui); color: #d0d0d0; }
.vp-labels svg { width: 18px; height: 17px; margin-left: 4px; }

.dialog { position: absolute; left: 394px; top: 272px; width: 772px; background: #444; color: #fff; font: 400 18px/24px var(--ui); border-radius: 10px; border: 1px solid #555; box-shadow: 0 12px 40px 8px rgba(0, 0, 0, .4); }
.dialog header { display: flex; align-items: center; height: 43px; padding-left: 12px; background: #f9f1e9; border-radius: 10px 10px 0 0; color: #111; }
.dialog .title-text { padding-left: 10px; flex: 1; }
.dmenu { display: flex; height: 30px; background: #fff; color: #111; }
.dm { position: relative; height: 30px; padding: 2px 12px 0; }
.dm.open { background: #f8f8f8; }
.drop { position: absolute; z-index: 5; left: 2px; top: 30px; width: 331px; background: #f9f9f9; border: 1px solid #ddd; border-radius: 8px; padding: 2px 7px; box-shadow: 4px 8px 16px rgba(0, 0, 0, .35); }
.drop button { display: flex; align-items: center; width: 100%; height: 35px; padding: 0 10px 2px 47px; border-radius: 4px; text-align: left; }
.drop button svg { width: 8px; height: 14px; margin-left: auto; }
.drop button.hover { background: #f0f0f0; }
.drop button:disabled { color: #a3a3a3; }
.drop hr { height: 1px; border: 0; background: #d4d4d4; margin: 5px; }
.mark { position: absolute; left: 33px; top: 344px; width: 183px; height: 44px; border: 5px solid #fc1f13; border-radius: 5px; }
.dtools { display: flex; align-items: center; height: 41px; padding: 6px 3px 0; }
.dtools button { width: 39px; height: 34px; display: flex; align-items: center; justify-content: center; }
.dtools svg { width: 14px; height: 14px; }
.dtools .on { width: 34px; margin-left: 6px; background: #5f8bc4; border-radius: 5px; }
.dtools .on svg { width: 16px; height: 16px; }
.dtools .big svg { width: 18px; height: 18px; }
.dgrid { margin: 0 3px 4px; border: 1px solid #7a7a7a; padding: 0 1px; }
table { width: 100%; table-layout: fixed; border-collapse: separate; border-spacing: 0; }
.c1 { width: 176px; } .c3 { width: 87px; } .c4 { width: 87px; } .c6 { width: 61px; }
th { height: 28px; padding: 0 6px; background: #fff; color: #111; font-weight: 400; text-align: left; border-right: 1px solid #ddd; white-space: nowrap; }
td { height: 28px; padding: 0 6px; border-right: 1px solid #f0f0f0; border-bottom: 1px solid #f0f0f0; white-space: nowrap; overflow: hidden; line-height: 24px; }
th:last-child, td:last-child { border-right: 0; }
.short td { height: 20px; border-bottom: 0; line-height: 16px; }
td.name { padding: 0; }
td.name div { display: flex; align-items: center; height: 27px; }
td.name svg { width: 22px; height: 24px; margin-right: 1px; }
.d0 { padding-left: 25px; } .d1 { padding-left: 48px; } .d2 { padding-left: 71px; } .d3 { padding-left: 96px; }
.d3 span { flex: 1; background: #0078d7; height: 27px; padding-left: 2px; line-height: 25px; }
.sel td:nth-child(n+2):not(:last-child) { background: #0078d7; }
.focus td:nth-child(n+2):not(:last-child), .focus .d3 span { border-top: 1px dotted #f58a3c; }
.dinput { display: block; width: calc(100% - 6px); height: 36px; margin: 0 3px 3px; border: 2px solid #fff; }

.panel { width: 618px; padding: 11px 0 0 6px; display: flex; flex-direction: column; }
.panel > .grip-h { margin-left: 3px; }
.ptabs { display: flex; height: 42px; margin-top: 4px; background: #3b3b3b; flex: none; }
.ptabs button { width: 48px; border-right: 1px solid #333; display: flex; align-items: center; justify-content: center; }
.ptabs button.active { background: #444; }
.ptabs svg { width: 25px; height: 26px; }
.pcols { flex: 1; display: flex; }
.pmain { width: 307px; padding-left: 4px; display: flex; flex-direction: column; }
.pcats { display: flex; padding-top: 7px; height: 48px; }
.pcats button { width: 34px; height: 34px; margin-right: 2px; display: flex; align-items: center; justify-content: center; }
.pcats button.on { background: #5f8bc4; border-radius: 5px; }
.pcats svg { width: 23px; height: 23px; }
.pcombo { height: 31px; margin-top: 0; }
.pcombo select { color: #d0d0d0; }
.prow { display: flex; flex: 1; gap: 4px; padding: 7px 0 4px; }
.rolls { width: 291px; }
.roll { background: #505050; border: 1px solid #3b3b3b; border-radius: 4px; margin-bottom: 5px; padding: 0 7px 7px; }
.roll h3 { display: flex; align-items: center; height: 27px; font-size: 18px; font-weight: 700; color: #fff; padding-right: 2px; }
.roll h3 i { border: 5px solid transparent; border-top: 8px solid #c4c4c4; border-bottom: 0; margin: 0 11px 0 1px; }
.roll h3 em { margin-left: auto; width: 10px; height: 10px; background: repeating-linear-gradient(90deg, transparent 0 1px, #505050 1px 2px), repeating-linear-gradient(#aaa 0 1px, #505050 1px 2px); }
.auto { display: flex; align-items: center; justify-content: center; height: 41px; color: #8a8a8a; gap: 8px; }
.auto input { appearance: none; width: 20px; height: 20px; border: 1px solid #484848; background: #585858; }
.prims { display: grid; grid-template-columns: 1fr 1fr; gap: 6px; }
.prims button, .gbtn { height: 31px; background: #646464; border: 1px solid #4a4a4a; border-radius: 5px; color: #d0d0d0; }
.prims button { padding-bottom: 2px; }
.namecol { display: flex; justify-content: space-between; padding: 4px 1px 0; }
.namecol input { width: 239px; height: 31px; border: 1px solid #484848; background: #585858; color: #8e8e8e; padding: 0 0 2px 8px; }
.namecol button { width: 30px; height: 30px; background: #cfcfcf; border: 1px solid #000; }
.bar { width: 9px; border-radius: 5px; background: #3b3b3b; }
.bar.far { margin: 0 6px 4px auto; }

.timeline { display: flex; padding: 8px 0 0 3px; flex: none; }
.timeline > .grip-v { margin: 1px 4px 4px 0; }
.tl { flex: 1; }
.slider { display: flex; gap: 2px; height: 31px; }
.slider button { height: 25px; width: 22px; border-radius: 4px; background: #646464; display: flex; align-items: center; justify-content: center; padding-bottom: 2px; }
.slider svg { width: 7px; height: 12px; fill: none; stroke: #ccc; margin-top: 2px; }
.slider .thumb { width: 185px; }
.track { display: flex; border-top: 2px solid #111; height: 56px; }
.tcurve { width: 24px; height: 24px; margin: 6px 30px 0 21px; }
.ruler { flex: 1; margin-right: 74px; background: #2a2a2a; padding: 0 9px 0 11px; }
.ticks { display: flex; justify-content: space-between; height: 37px; margin: 0 -11px 0 -11px; padding: 0 11px; border-bottom: 1px solid #444; }
.ticks > span { width: 1px; height: 16px; background: #666; position: relative; flex: none; }
.ticks > .major { height: 36px; background: linear-gradient(#666 18px, transparent 18px 32px, #666 32px); }
.ticks b { position: absolute; left: -20px; top: 12px; width: 40px; text-align: center; font-weight: 300; color: #c4c4c4; z-index: 1; }
.ticks .now::before { content: ""; position: absolute; left: -10px; top: 0; width: 20px; height: 36px; background: linear-gradient(#78a010 16px, #7c7018 16px) 5px 0 / 11px 36px no-repeat, linear-gradient(#1a6c1a, #1a6c1a) 0 0 / 20px 16px no-repeat; }
.ticks .now b { color: #d8d860; }

.status { display: flex; height: 81px; padding: 5px 11px 0 4px; flex: none; }
.listener { width: 149px; height: 73px; display: flex; flex-direction: column; gap: 2px; }
.listener input { width: 100%; flex: 1; min-height: 0; background: #fff; color: #111; border: 2px inset #999; padding: 0 0 9px 4px; }
.listener .pink { background: #dcc4c6; }
.bevel { width: 6px; height: 76px; margin: -1px 4px 0 3px; border: 1px solid #222; border-left-color: #555; }
.prompt { flex: 1; }
.prompt p { height: 36px; line-height: 34px; color: #eee; white-space: nowrap; }
.line { display: flex; align-items: center; height: 34px; }
.status button { display: flex; align-items: center; justify-content: center; flex: none; }
.mid { width: 668px; flex: none; padding-top: 1px; color: #eee; }
.slot40 { width: 40px; } .slot40 svg { width: 22px; height: 22px; }
.coord { display: flex; align-items: center; margin-left: 3px; margin-right: 16px; }
.coord span { width: 22px; }
.coord input { width: 87px; height: 27px; background: #585858; border: 1px solid #3c3c3c; color: #8c8c8c; padding: 0 0 2px 3px; }
.gridtext { padding-left: 6px; white-space: nowrap; }
.second { padding-left: 294px; }
.vline { width: 2px; height: 24px; background: #222; flex: none; }
.sq { width: 30px; height: 31px; background: #646464; border-radius: 5px; margin: 0 9px 0 8px; }
.status .sq { border-radius: 5px; }
.sq svg { width: 21px; height: 21px; }
.dot { width: 13px; height: 13px; border-radius: 7px; background: #50da40; margin-left: 6px; }
.second .i24 { width: 19px; height: 19px; margin: 0 12px 0 14px; }
.transport { width: 196px; flex: none; }
.slot34 { width: 34px; } .slot34 svg { width: 23px; height: 23px; }
.slot34.first, .slot34.last { width: 37px; }
.frame { display: flex; width: 105px; height: 26px; background: #646464; border: 1px solid #3c3c3c; }
.frame input { width: 88px; padding: 0 0 2px 3px; }
.frame > span { width: 14px; display: flex; flex-direction: column; justify-content: center; gap: 3px; }
.up { border: 4px solid transparent; border-bottom: 6px solid #ddd; border-top: 0; width: 8px; }
.down { border: 4px solid transparent; border-top: 6px solid #ddd; border-bottom: 0; width: 8px; }
.bigkey { width: 62px; height: 69px; }
.status .bigkey svg { width: 42px; height: 42px; }
.keys { width: 98px; margin: 0 5px; flex: none; display: flex; flex-direction: column; gap: 2px; }
.keys .gbtn { height: 32px; padding-bottom: 2px; }
.keys2 { width: 167px; flex: none; display: flex; flex-direction: column; gap: 8px; }
.keys2 > div { display: flex; align-items: center; justify-content: space-between; }
.keys2 .filter { width: 129px; height: 32px; padding-bottom: 2px; }
.nav { margin-left: 20px; display: grid; grid-template-columns: repeat(4, 35px); grid-auto-rows: 34px; }
.nav button svg { width: 23px; height: 23px; }
</style>
